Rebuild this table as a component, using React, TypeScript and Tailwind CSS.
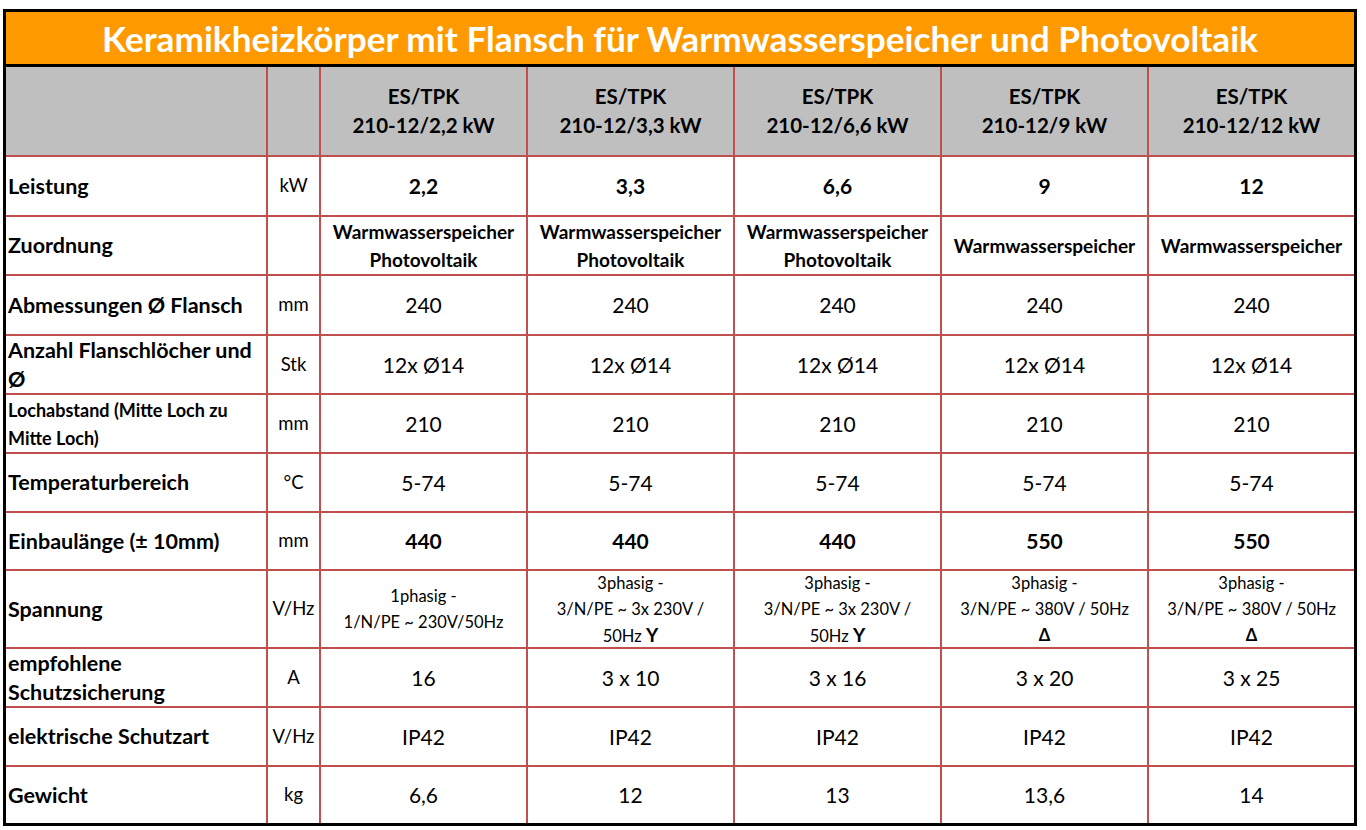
import React from 'react';

type Row = {
  label: React.ReactNode;
  labelClass?: string;
  unit: string;
  cells: React.ReactNode[];
  cellClass?: string;
};

const models = ['2,2', '3,3', '6,6', '9', '12'];

const rows: Row[] = [
  { label: 'Leistung', unit: 'kW', cells: ['2,2', '3,3', '6,6', '9', '12'], cellClass: 'font-bold text-[21px]' },
  {
    label: 'Zuordnung',
    unit: '',
    cellClass: 'font-bold text-[19px] leading-[28px]',
    cells: [
      <>Warmwasserspeicher<br />Photovoltaik</>,
      <>Warmwasserspeicher<br />Photovoltaik</>,
      <>Warmwasserspeicher<br />Photovoltaik</>,
      'Warmwasserspeicher',
      'Warmwasserspeicher',
    ],
  },
  { label: 'Abmessungen Ø Flansch', unit: 'mm', cells: Array(5).fill('240') },
  { label: 'Anzahl Flanschlöcher und Ø', unit: 'Stk', cells: Array(5).fill('12x Ø14') },
  {
    label: 'Lochabstand (Mitte Loch zu Mitte Loch)',
    labelClass: 'text-[18px] leading-[28px]',
    unit: 'mm',
    cells: Array(5).fill('210'),
  },
  { label: 'Temperaturbereich', unit: '°C', cells: Array(5).fill('5-74') },
  {
    label: 'Einbaulänge (± 10mm)',
    unit: 'mm',
    cells: ['440', '440', '440', '550', '550'],
    cellClass: 'font-bold text-[21px]',
  },
  {
    label: 'Spannung',
    unit: 'V/Hz',
    cellClass: 'text-[16.5px] leading-[26px]',
    cells: [
      <>1phasig -<br />1/N/PE ~ 230V/50Hz</>,
      <>3phasig -<br />3/N/PE ~ 3x 230V /<br />50Hz <b className="text-[19px]">Y</b></>,
      <>3phasig -<br />3/N/PE ~ 3x 230V /<br />50Hz <b className="text-[19px]">Y</b></>,
      <>3phasig -<br />3/N/PE ~ 380V / 50Hz<br /><b>Δ</b></>,
      <>3phasig -<br />3/N/PE ~ 380V / 50Hz<br /><b>Δ</b></>,
    ],
  },
  { label: 'empfohlene Schutzsicherung', unit: 'A', cells: ['16', '3 x 10', '3 x 16', '3 x 20', '3 x 25'] },
  { label: 'elektrische Schutzart', unit: 'V/Hz', cells: Array(5).fill('IP42') },
  { label: 'Gewicht', unit: 'kg', cells: ['6,6', '12', '13', '13,6', '14'] },
];

export default function App() {
  return (
    <div className="h-[830px] w-[1366px] bg-white pl-[3px] pt-[9px] font-['Lato','Liberation_Sans',sans-serif] text-black">
      <div className="w-[1354px] border-[3px] border-black">
        <div className="flex h-[55px] items-center justify-center border-b-[3px] border-black bg-[#ff9900] text-[35.2px] font-bold text-white">
          Keramikheizkörper mit Flansch für Warmwasserspeicher und Photovoltaik
        </div>
        <div className="grid grid-cols-[260px_51px_205px_205px_205px_205px_205px] grid-rows-[88px_58px_57px_58px_57px_57px_57px_56px_76px_57px_57px_56px] gap-[2px] bg-[#c0504d]">
          <div className="bg-[#bfbfbf]" />
          <div className="bg-[#bfbfbf]" />
          {models.map((m) => (
            <div
              key={m}
              className="flex flex-col items-center justify-center bg-[#bfbfbf] text-center text-[20.5px] font-bold leading-[29px]"
            >
              <span>ES/TPK</span>
              <span>210-12/{m} kW</span>
            </div>
          ))}
          {rows.map((r, i) => (
            <React.Fragment key={i}>
              <div className={`flex items-center bg-white pl-[2px] font-bold ${r.labelClass ?? 'text-[21.5px] leading-[29px]'}`}>
                <span>{r.label}</span>
              </div>
              <div className="flex items-center justify-center bg-white text-[18.5px]">{r.unit}</div>
              {r.cells.map((c, j) => (
                <div
                  key={j}
                  className={`flex items-center justify-center bg-white text-center ${r.cellClass ?? 'text-[21px]'}`}
                >
                  <span>{c}</span>
                </div>
              ))}
            </React.Fragment>
          ))}
        </div>
      </div>
    </div>
  );
}
